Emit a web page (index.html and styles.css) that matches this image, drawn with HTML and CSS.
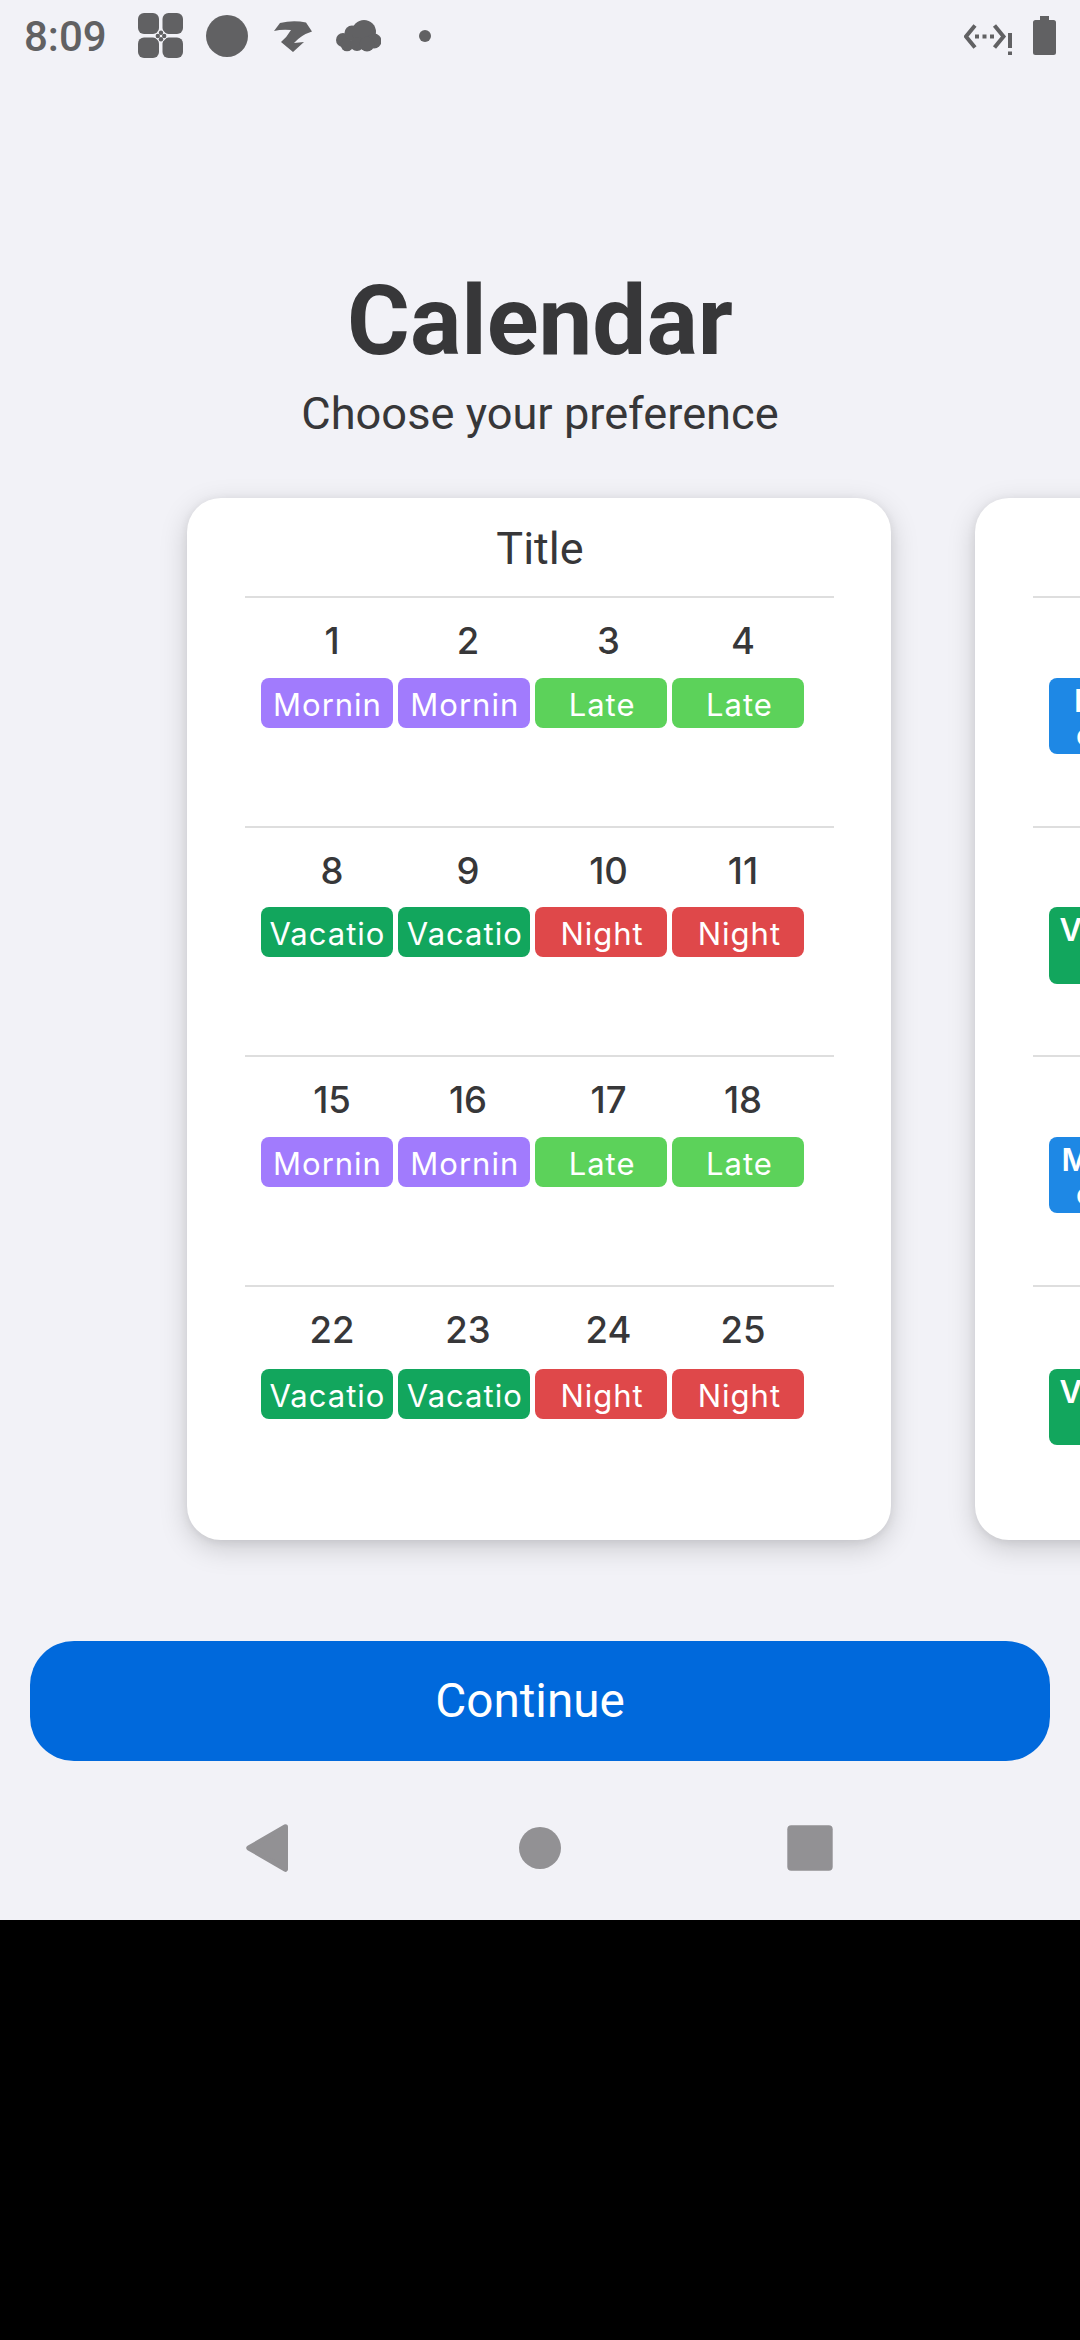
FILE: index.html
```html
<!DOCTYPE html>
<html lang="en">
<head>
<meta charset="utf-8">
<title>Calendar</title>
<link rel="stylesheet" href="styles.css">
</head>
<body>
<div class="screen">
  <header class="status">
    <span class="clock">8:09</span>
    <svg class="ic ic-grid" viewBox="138 13 45 45" width="45" height="45"><rect x="138" y="13" width="21" height="21" rx="6"/><rect x="162.500" y="13" width="20.500" height="21" rx="6"/><rect x="138" y="37.500" width="21" height="20.500" rx="6"/><rect x="162.500" y="37.500" width="20.500" height="20.500" rx="6"/><path class="halo" d="M161 28.500l7.500 7.500-7.500 7.500-7.500-7.500z"/><circle cx="161" cy="32.800" r="2.200"/><circle cx="161" cy="39.200" r="2.200"/><circle cx="157.800" cy="36" r="2.200"/><circle cx="164.200" cy="36" r="2.200"/></svg>
    <svg class="ic ic-disc" viewBox="206 15 42 42" width="42" height="42"><circle cx="227" cy="36" r="21"/></svg>
    <svg class="ic ic-bolt" viewBox="274 21 38 31" width="38" height="31"><path d="M274 31L280 23Q293 20 306 22.500L312 31.500Q301 35 294 43L304 42 293 52 281 42Q287 37 291 30Q282 29 274 31z"/></svg>
    <svg class="ic ic-cloud" viewBox="336 20 45 32" width="45" height="32"><circle cx="343" cy="40" r="7"/><circle cx="352" cy="33" r="7.500"/><circle cx="364" cy="32" r="12"/><circle cx="374" cy="41" r="7.500"/><circle cx="347" cy="45" r="6.300"/><circle cx="357" cy="44" r="7"/><circle cx="367" cy="44" r="7.500"/></svg>
    <svg class="ic ic-dot" viewBox="419 30 12 12" width="12" height="12"><circle cx="425" cy="36" r="6"/></svg>
    <svg class="ic ic-net" viewBox="964 24 49 32" width="49" height="32"><path class="stroke" d="M975 25.500L966 36.500 975 47.500M994.500 25.500L1003.500 36.500 994.500 47.500"/><path d="M975 34.500h4v4h-4zM982.500 34.500h4v4h-4zM990 34.500h4v4h-4zM1008 33h4v15h-4zM1008 51.500h4v3.500h-4z"/></svg>
    <svg class="ic ic-bat" viewBox="1033 16 23 39" width="23" height="39"><path d="M1040 16h9v4h4.500q2.500 0 2.500 2.500v30q0 2.500-2.500 2.500h-18q-2.500 0-2.500-2.500v-30q0-2.500 2.500-2.500h4.500z"/></svg>
  </header>

  <h1 class="heading">Calendar</h1>
  <p class="sub">Choose your preference</p>

  <main class="carousel">
    <section class="card">
      <h2 class="card-title">Title</h2>
      <div class="week">
        <div class="nums"><span>1</span><span>2</span><span>3</span><span>4</span></div>
        <div class="chips"><span class="chip purple">Mornin</span><span class="chip purple">Mornin</span><span class="chip lime">Late</span><span class="chip lime">Late</span></div>
      </div>
      <div class="week">
        <div class="nums"><span>8</span><span>9</span><span>10</span><span>11</span></div>
        <div class="chips"><span class="chip green">Vacatio</span><span class="chip green">Vacatio</span><span class="chip red">Night</span><span class="chip red">Night</span></div>
      </div>
      <div class="week">
        <div class="nums"><span>15</span><span>16</span><span>17</span><span>18</span></div>
        <div class="chips"><span class="chip purple">Mornin</span><span class="chip purple">Mornin</span><span class="chip lime">Late</span><span class="chip lime">Late</span></div>
      </div>
      <div class="week last">
        <div class="nums"><span>22</span><span>23</span><span>24</span><span>25</span></div>
        <div class="chips"><span class="chip green">Vacatio</span><span class="chip green">Vacatio</span><span class="chip red">Night</span><span class="chip red">Night</span></div>
      </div>
    </section>
    <section class="card">
      <h2 class="card-title"></h2>
      <div class="week"><div class="nums"></div><div class="chips"><span class="chip tall blue in-late"><b>E</b><b>c</b></span></div></div>
      <div class="week"><div class="nums"></div><div class="chips"><span class="chip tall green in-early"><b>V</b></span></div></div>
      <div class="week"><div class="nums"></div><div class="chips"><span class="chip tall blue in-mid"><b>M</b><b>c</b></span></div></div>
      <div class="week last"><div class="nums"></div><div class="chips"><span class="chip tall green in-early"><b>V</b></span></div></div>
    </section>
  </main>

  <button class="continue">Continue</button>

  <nav class="nav">
    <svg viewBox="0 0 48 48" width="48" height="48"><path d="M39.500 2.700L2.800 24 39.500 45.300z" stroke-width="5" stroke-linejoin="round"/></svg>
    <svg viewBox="0 0 48 48" width="48" height="48"><circle cx="24" cy="24" r="21"/></svg>
    <svg viewBox="0 0 48 48" width="48" height="48"><rect x="1.300" y="1.300" width="45.400" height="45.400" rx="4"/></svg>
  </nav>
</div>
</body>
</html>
```
FILE: styles.css
```css
* { box-sizing: border-box; }
body { margin: 0; background: #000; height: 2340px; overflow: hidden; }
.screen {
  width: 1080px; height: 1920px; overflow: hidden;
  display: flex; flex-direction: column;
  background: #f2f2f7; color: #373739;
  font-family: Roboto, sans-serif;
}
.status { height: 72px; flex: none; display: flex; align-items: flex-start; color: #616163; padding-left: 24px; }
.clock { width: 114px; font-size: 42px; font-weight: 500; line-height: 48px; margin-top: 13px; }
.ic { display: block; flex: none; fill: #616163; }
.ic-grid { margin-top: 13px; }
.ic-disc { margin: 15px 0 0 23px; }
.ic-bolt { margin: 21px 0 0 26px; }
.ic-cloud { margin: 20px 0 0 24px; }
.ic-dot { margin: 30px 0 0 38px; }
.ic-net { margin: 24px 0 0 533px; }
.ic-bat { margin: 16px 0 0 20px; }
.halo { fill: #f2f2f7; }
.stroke { fill: none; stroke: #616163; stroke-width: 4px; }

.heading { margin: 193px 0 0; font-size: 96px; line-height: 112px; font-weight: 700; text-align: center; }
.sub { margin: 11px 0 0; font-size: 45.200px; line-height: 52px; text-align: center; }

.carousel { display: flex; gap: 84px; margin-top: 58px; padding-left: 187px; flex: none; }
.card {
  width: 704px; height: 1042px; flex: none;
  padding: 0 57.500px; background: #fff; border-radius: 34px;
  box-shadow: 0 8px 28px rgba(0,0,0,.17), 0 2px 10px rgba(0,0,0,.07);
}
.card-title { margin: 0; height: 98px; font-size: 45px; font-weight: 400; line-height: 101px; text-align: center; padding-left: 2px; }
.week { height: 229.600px; border-top: 2px solid #dedede; padding: 19px 14px 0 16px; }
.nums { height: 60.700px; display: grid; grid-template-columns: 143px 129px 152px 117px; font: 500 36.500px/48px Inter, sans-serif; text-align: center; }
.chips { display: flex; gap: 5.300px; }
.last .chips { padding-top: 2.500px; }
.chip { flex: none; width: 132px; height: 50px; border-radius: 8px; color: #fff; font: 400 31px/54px Inter, sans-serif; letter-spacing: 1px; text-align: center; padding-left: 2px; overflow: hidden; }
.purple { background: #a17bfd; }
.lime { background: #5cd25a; }
.green { background: #12a65d; }
.red { background: #df484a; }
.blue { background: #1e88e5; }
.tall { height: 76.500px; display: flex; flex-direction: column; padding-top: 6px; text-align: left; line-height: 34px; letter-spacing: 0; }
.tall b { font-weight: 600; }
.in-late { padding-left: 25.500px; }
.in-mid { padding-left: 13px; }
.in-mid b + b { padding-left: 14.500px; }
.in-late b + b { padding-left: 2px; }
.in-early { padding-left: 11px; }

.continue { margin: 101px 30px 0; height: 120px; flex: none; padding: 0 20px 0 0; border: 0; border-radius: 44px; background: #0069dc; color: #fff; font: 400 47.700px/56px Roboto, sans-serif; }
.nav { margin-top: 63px; display: flex; justify-content: center; gap: 222px; fill: #929194; stroke: none; }
.nav path { stroke: #929194; }
```
